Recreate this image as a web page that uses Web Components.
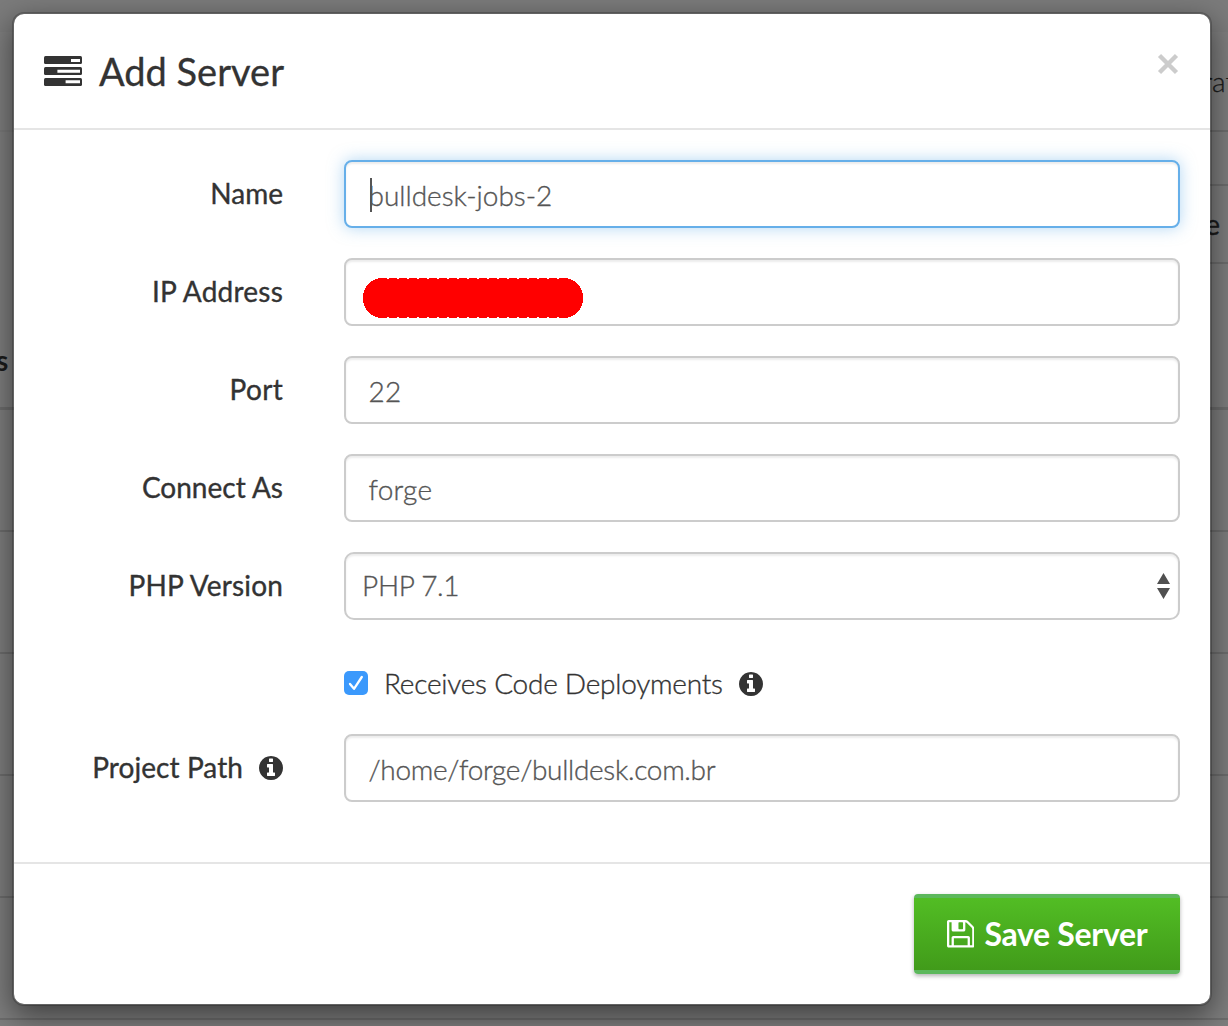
<!DOCTYPE html>
<html lang="en">
<head>
<meta charset="utf-8">
<title>Add Server</title>
<style>
html,body{margin:0;height:100%;overflow:hidden}
body{font-family:Lato,"Liberation Sans",sans-serif;font-size:28px;color:#333;background:#7e7e7e}
</style>
</head>
<body>
<app-shell>
  <page-backdrop></page-backdrop>
  <modal-dialog slot="modal">
    <server-icon slot="icon"></server-icon>
    <span slot="title">Add Server</span>
    <form-row><span slot="label">Name</span><text-field focused>bulldesk-jobs-2</text-field></form-row>
    <form-row style="--track:.22px"><span slot="label">IP Address</span><text-field><redacted-value></redacted-value></text-field></form-row>
    <form-row style="--track:.3px"><span slot="label">Port</span><text-field>22</text-field></form-row>
    <form-row><span slot="label">Connect As</span><text-field style="--track:.2px">forge</text-field></form-row>
    <form-row style="--track:.18px"><span slot="label">PHP Version</span><select-field>PHP 7.1</select-field></form-row>
    <form-row class="check"><check-field>Receives Code Deployments</check-field></form-row>
    <form-row style="--track:.08px"><span slot="label">Project Path</span><info-icon slot="label"></info-icon><text-field style="--track:-.31px">/home/forge/bulldesk.com.br</text-field></form-row>
    <save-button slot="footer">Save Server</save-button>
  </modal-dialog>
</app-shell>
<script>
const define = (name, html) => {
  const t = document.createElement('template');
  t.innerHTML = html;
  customElements.define(name, class extends HTMLElement {
    constructor() {
      super();
      this.attachShadow({ mode: 'open' }).append(t.content.cloneNode(true));
    }
  });
};

define('app-shell', `<style>
:host{display:block;position:relative;width:1228px;height:1026px;overflow:hidden}
.over{position:absolute;inset:0;box-sizing:border-box;padding:12px 16px 20px 12px;display:flex}
</style><slot></slot><div class="over"><slot name="modal"></slot></div>`);

define('page-backdrop', `<style>
:host{display:flex;flex-direction:column;height:100%;background:#7e7e7e;color:#1b1b1b}
div{box-sizing:border-box;flex:none;border-bottom:2px solid #6d6d6d;display:flex;align-items:center;justify-content:flex-end;white-space:nowrap}
.top{height:32px;background:#7b7b7b;border:0}
.nav{height:100px;font-weight:300;-webkit-text-stroke:.3px;border-image:linear-gradient(90deg,#797979 50%,#6d6d6d 50%) 2}
.nav span{margin-right:-7px}
.gap{height:54px;border-image:linear-gradient(90deg,transparent 50%,#6d6d6d 50%) 2}
.head{height:78px;font-weight:400;-webkit-text-stroke:.3px;border-image:linear-gradient(90deg,transparent 50%,#6d6d6d 50%) 2}
.head span{margin-right:8px}
.cols{height:146px;border-bottom-width:3px;justify-content:flex-start;font-weight:700;padding-top:49px}
.cols span{margin-left:-4px}
.row{height:122px}
</style><div class="top"></div><div class="nav"><span>rat</span></div><div class="gap"></div><div class="head"><span>e</span></div><div class="cols"><span>s</span></div><div class="row"></div><div class="row"></div><div class="row"></div><div class="row"></div><div class="row"></div>`);

define('modal-dialog', `<style>
:host{flex:1;box-sizing:border-box;display:flex;flex-direction:column;background:#fff;background-clip:padding-box;border:2px solid rgba(0,0,0,.2);border-radius:12px;box-shadow:0 10px 30px rgba(0,0,0,.5)}
header{display:flex;align-items:center;box-sizing:border-box;height:116px;border-bottom:2px solid #e5e5e5;padding:0 31px 0 30px}
h4{margin:0 0 0 17px;font-size:38px;line-height:42px;font-weight:400;-webkit-text-stroke:.3px;flex:1;white-space:nowrap}
.x{width:22px;height:22px;margin-top:-15px}
main{flex:1;display:flex;flex-direction:column;gap:30px;padding:30px 30px 0 0}
footer{display:flex;justify-content:flex-end;box-sizing:border-box;height:142px;border-top:2px solid #e5e5e5;padding:30px}
</style><header><slot name="icon"></slot><h4><slot name="title"></slot></h4>
<svg class="x" viewBox="0 0 22 22"><path d="M2.500 2.500l17 17M19.500 2.500l-17 17" stroke="#ccc" stroke-width="4.400"/></svg></header>
<main><slot></slot></main><footer><slot name="footer"></slot></footer>`);

define('form-row', `<style>
:host{display:flex;height:68px}
:host(.check){height:54px}
.label{display:flex;align-items:center;justify-content:flex-end;gap:16px;width:269px;margin-right:61px;font-weight:400;line-height:40px;white-space:nowrap;letter-spacing:var(--track,0);-webkit-text-stroke:.35px}
.label ::slotted(span){padding-bottom:2px}
.control{flex:1;display:flex;align-items:center}
</style><div class="label"><slot name="label"></slot></div><div class="control"><slot></slot></div>`);

define('text-field', `<style>
:host{flex:1;display:flex;align-items:center;box-sizing:border-box;height:68px;border:2px solid #ccc;border-radius:8px;padding:2px 23px 0 22.500px;background:#fff;color:#555;font-weight:300;line-height:40px;white-space:nowrap;letter-spacing:var(--track,0);-webkit-text-stroke:.35px;box-shadow:inset 0 2px 2px rgba(0,0,0,.075)}
:host([focused]){letter-spacing:0;border-color:#66afe9;box-shadow:inset 0 2px 2px rgba(0,0,0,.075),0 0 16px rgba(102,175,233,.5)}
i{display:none;width:2px;height:34px;background:#555;margin:-1px -2px 0 0;position:relative;left:1px}
:host([focused]) i{display:block}
</style><i></i><slot></slot>`);

define('redacted-value', `<style>
:host{display:block;margin:9px 0 0 -5.500px;width:220px;height:40px}svg{display:block}
</style><svg width="220" height="40"><rect width="220" height="40" rx="19" fill="#f00" shape-rendering="crispEdges"/><path d="M24 .5H200M24 39.500H200" stroke="#fff" stroke-dasharray="2 8"/></svg>`);

define('select-field', `<style>
:host{flex:1;display:flex;align-items:center;justify-content:space-between;box-sizing:border-box;height:68px;border:2px solid #ccc;border-radius:10px;padding:0 8px 0 16px;color:#555;font-weight:300;line-height:40px;box-shadow:inset 0 2px 2px rgba(0,0,0,.075)}
span{padding-bottom:2px;letter-spacing:-.3px;-webkit-text-stroke:.35px}
</style><span><slot></slot></span><svg width="13" height="26" viewBox="0 0 13 26"><path d="M6.500 0L13 11H0zM0 15h13L6.500 26z" fill="#505050"/></svg>`);

define('check-field', `<style>
:host{display:flex;align-items:center;font-weight:300;line-height:40px;padding-top:12px;white-space:nowrap}
.t{margin:0 16px;letter-spacing:-.24px;-webkit-text-stroke:.35px}svg{display:block}info-icon{margin-top:2px}
</style><svg width="24" height="24" viewBox="0 0 24 24"><rect width="24" height="24" rx="5" fill="#3b99fc"/><path d="M6 13l4 4.800L17.800 6" fill="none" stroke="#fff" stroke-width="2.300" stroke-linecap="round" stroke-linejoin="round"/></svg><span class="t"><slot></slot></span><info-icon></info-icon>`);

define('info-icon', `<style>:host{display:block}svg{display:block}</style>
<svg width="24" height="24" viewBox="128 128 1536 1536"><path fill="#333" d="M1152 1376v-160q0-14-9-23t-23-9h-96v-512q0-14-9-23t-23-9h-320q-14 0-23 9t-9 23v160q0 14 9 23t23 9h96v320h-96q-14 0-23 9t-9 23v160q0 14 9 23t23 9h448q14 0 23-9t9-23zm-128-896v-160q0-14-9-23t-23-9h-192q-14 0-23 9t-9 23v160q0 14 9 23t23 9h192q14 0 23-9t9-23zm640 416q0 209-103 385.500t-279.500 279.500-385.500 103-385.500-103-279.500-279.500-103-385.500 103-385.500 279.500-279.500 385.500-103 385.500 103 279.500 279.500 103 385.500z"/></svg>`);

define('server-icon', `<style>:host{display:block}svg{display:block}</style>
<svg width="38" height="30" viewBox="0 0 38 30"><g fill="#333"><rect width="38" height="8" rx="1.500"/><rect y="11" width="38" height="8" rx="1.500"/><rect y="22" width="38" height="8" rx="1.500"/></g><path d="M27 3h9v3h-9zM13.400 13.700H36v3H13.400zM21.600 24.300H36v3H21.600z" fill="#fff"/></svg>`);

define('save-button', `<style>
:host{display:flex;align-items:center;box-sizing:border-box;width:266px;height:80px;gap:10.500px;padding-left:32.500px;border:solid #5cb85c;border-width:4px 0;border-radius:4px;background:linear-gradient(#52bd24,#419b1a);box-shadow:0 2px 4px rgba(0,0,0,.3);color:#fff;font-size:32px;font-weight:700;letter-spacing:-.32px;white-space:nowrap}
svg{display:block}span{padding-bottom:2px}
</style><svg width="27.500" height="27.500" viewBox="128 128 1536 1536"><path fill="#fff" d="M512 1536h768v-384h-768v384zm896 0h128v-896q0-14-10-38.500t-20-34.500l-281-281q-10-10-34-20t-39-10v416q0 40-28 68t-68 28h-576q-40 0-68-28t-28-68v-416h-128v1280h128v-416q0-40 28-68t68-28h832q40 0 68 28t28 68v416zm-384-928v-320q0-13-9.500-22.500t-22.500-9.500h-192q-13 0-22.500 9.500t-9.500 22.500v320q0 13 9.500 22.500t22.500 9.500h192q13 0 22.500-9.500t9.500-22.500zm640 32v928q0 40-28 68t-68 28h-1344q-40 0-68-28t-28-68v-1344q0-40 28-68t68-28h928q40 0 88 20t76 48l280 280q28 28 48 76t20 88z"/></svg><span><slot></slot></span>`);
</script>
</body>
</html>
